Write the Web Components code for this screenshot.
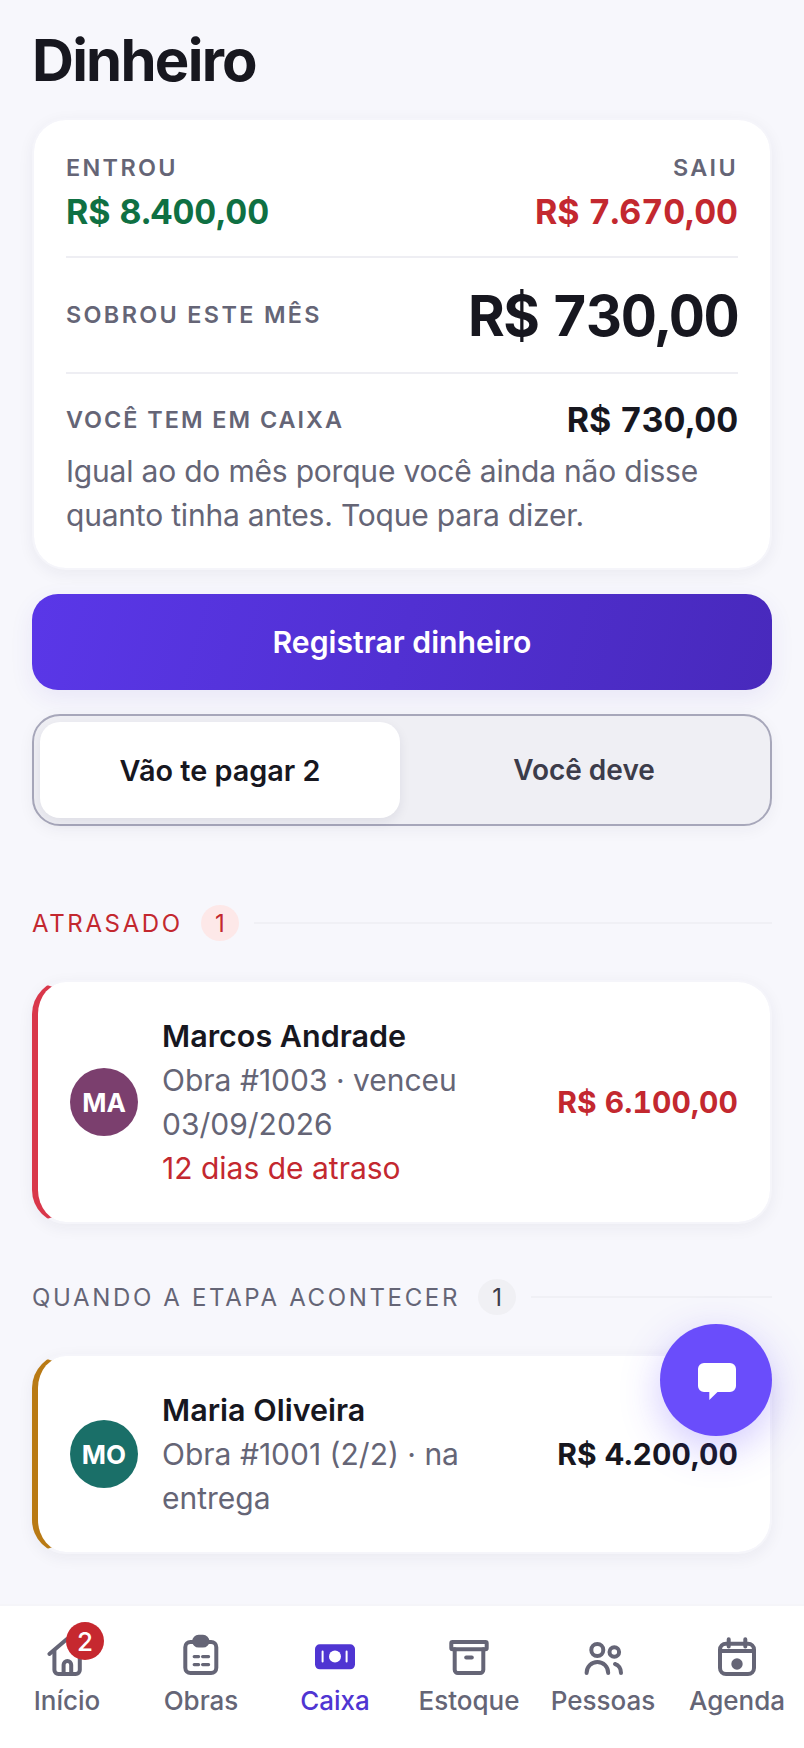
<!DOCTYPE html>
<html lang="pt-BR">
<head>
<meta charset="utf-8">
<title>Dinheiro</title>
<style>
  html, body { margin: 0; height: 100%; }
  body { font-family: Inter, "Noto Sans", sans-serif; background: #f7f7fc; color: #17171f; }
</style>
</head>
<body>
<app-shell>
  <page-title>Dinheiro</page-title>
  <money-summary></money-summary>
  <primary-button>Registrar dinheiro</primary-button>
  <segment-tabs></segment-tabs>
  <section-head tone="late" count="1">ATRASADO</section-head>
  <debt-card tone="late" initials="MA" amount="R$ 6.100,00" name="Marcos Andrade">
    Obra #1003 · venceu 03/09/2026
    <span slot="extra">12 dias de atraso</span>
  </debt-card>
  <section-head count="1">QUANDO A ETAPA ACONTECER</section-head>
  <debt-card tone="wait" initials="MO" amount="R$ 4.200,00" name="Maria Oliveira">
    Obra #1001 (2/2) · na entrega
  </debt-card>
  <chat-fab slot="over"></chat-fab>
  <bottom-nav slot="nav"></bottom-nav>
</app-shell>

<script>
(function () {
    'use strict';

    // small helper, every element below is the same shape
    function define(name, css, html) {
        customElements.define(name, class extends HTMLElement {
            constructor() {
                super();
                let root = this.attachShadow({ mode: 'open' });
                root.innerHTML = `<style>${css}</style>` + (typeof html === 'function' ? html(this) : html);
            }
        });
    }

    define('app-shell', `
        :host { display: flex; flex-direction: column; height: 100vh; position: relative; overflow: hidden; }
        main { flex: 1; min-height: 0; overflow: hidden; padding: 0 32px; }
    `, `<main><slot></slot></main><slot name="over"></slot><slot name="nav"></slot>`);

    define('page-title', `
        :host { display: block; padding-top: 30px; margin-bottom: 28px; font-size: 58px; line-height: 60px; font-weight: 700; letter-spacing: -0.03em; color: #17171f; }
    `, `<slot></slot>`);

    define('money-summary', `
        :host { display: block; box-sizing: border-box; background: #fff; background-clip: padding-box; border: 2px solid #f5f5fa; border-radius: 34px; padding: 34px 32px 31px; box-shadow: 0 4px 16px rgba(30,30,60,.06); }
        .top { display: flex; justify-content: space-between; padding-bottom: 23px; border-bottom: 2px solid #eeeef3; }
        .right { text-align: right; }
        .label { font-size: 23.4px; line-height: 28px; font-weight: 600; letter-spacing: .1em; color: #656576; white-space: nowrap; }
        .tight { letter-spacing: .085em; }
        .val { font-size: 34px; line-height: 42px; font-weight: 700; margin-top: 9px; letter-spacing: -0.002em; font-variant-numeric: tabular-nums; }
        .in { color: #0f7043; }
        .out { color: #c3282f; }
        .mid { display: flex; justify-content: space-between; align-items: center; height: 114px; border-bottom: 2px solid #eeeef3; }
        .big { font-size: 56px; font-weight: 700; line-height: 68px; padding-top: 2px; letter-spacing: -0.029em; font-variant-numeric: tabular-nums; }
        .cash { display: flex; justify-content: space-between; align-items: center; height: 44px; margin-top: 24px; }
        .cash b { font-size: 34px; font-weight: 700; margin-top: -2px; letter-spacing: -0.005em; font-variant-numeric: tabular-nums; }
        p { margin: 7px 0 0; font-size: 30px; line-height: 44px; letter-spacing: -0.0067em; color: #656576; }
    `, `
        <div class="top">
          <div><div class="label">ENTROU</div><div class="val in">R$ 8.400,00</div></div>
          <div class="right"><div class="label">SAIU</div><div class="val out">R$ 7.670,00</div></div>
        </div>
        <div class="mid"><span class="label">SOBROU ESTE MÊS</span><span class="big">R$ 730,00</span></div>
        <div class="cash"><span class="label tight">VOCÊ TEM EM CAIXA</span><b>R$ 730,00</b></div>
        <p>Igual ao do mês porque você ainda não disse quanto tinha antes. Toque para dizer.</p>
    `);

    define('primary-button', `
        :host { display: flex; align-items: center; justify-content: center; height: 96px; margin-top: 24px; border-radius: 26px; color: #fff; font-size: 30.2px; font-weight: 600; background: linear-gradient(105deg, #5a37e8 0%, #4829bc 100%); box-shadow: 0 8px 24px rgba(70,40,190,.08); }
    `, `<slot></slot>`);

    define('segment-tabs', `
        :host { display: flex; box-sizing: border-box; height: 112px; margin-top: 24px; padding: 6px; gap: 4px; border: 2px solid #a7a7ba; border-radius: 28px; background: #efeff4; box-shadow: 0 4px 16px rgba(30,30,60,.05); font-size: 28px; }
        div { flex: 1; display: flex; align-items: center; justify-content: center; border-radius: 20px; font-weight: 600; color: #3c3c4a; }
        .on { background: #fff; color: #17171f; font-size: 28.8px; box-shadow: 0 4px 12px rgba(30,30,60,.08); }
    `, `<div class="on">Vão te pagar 2</div><div>Você deve</div>`);

    define('section-head', `
        :host { display: flex; align-items: center; height: 36px; margin-top: 55px; margin-bottom: 39px; color: #656576; font-size: 24px; letter-spacing: 2.65px; }
        :host([tone="late"]) { color: #c3282f; margin-top: 79px; }
        .n { width: 38px; height: 36px; margin-left: 18px; border-radius: 50%; display: flex; align-items: center; justify-content: center; letter-spacing: 0; background: #f0f0f4; color: #3c3c4a; }
        :host([tone="late"]) .n { background: #fde8e8; color: #c3282f; }
        .line { flex: 1; height: 2px; margin-left: 15px; background: #f0f0f5; }
    `, el => `<slot></slot><span class="n">${el.getAttribute('count')}</span><span class="line"></span>`);

    define('debt-card', `
        :host { display: flex; align-items: center; gap: 24px; box-sizing: border-box; padding: 32px 32px; background: #fff; background-clip: padding-box; border: 2px solid #f5f5fa; border-left: 6px solid #d9374a; border-radius: 34px; box-shadow: 0 4px 16px rgba(30,30,60,.06); }
        :host([tone="wait"]) { border-left-color: #b97a14; }
        .av { flex: none; width: 68px; height: 68px; border-radius: 50%; display: flex; align-items: center; justify-content: center; color: #fff; font-size: 26px; font-weight: 700; background: #7b3f6e; }
        :host([tone="wait"]) .av { background: #1a6f68; }
        .body { flex: 1; min-width: 0; font-size: 30px; line-height: 44px; color: #656576; }
        .name { font-size: 30.5px; font-weight: 600; color: #17171f; }
        ::slotted([slot="extra"]) { display: block; color: #c3282f; }
        .amt { flex: none; font-size: 30px; font-weight: 700; color: #17171f; letter-spacing: 0.003em; font-variant-numeric: tabular-nums; }
        :host([tone="late"]) .amt { color: #c3282f; }
    `, el => `
        <div class="av">${el.getAttribute('initials')}</div>
        <div class="body"><div class="name">${el.getAttribute('name')}</div><slot></slot><slot name="extra"></slot></div>
        <div class="amt">${el.getAttribute('amount')}</div>
    `);

    define('chat-fab', `
        :host { position: absolute; left: 660px; top: 1324px; width: 112px; height: 112px; border-radius: 50%; background: #6a4dfb; display: flex; align-items: center; justify-content: center; box-shadow: 0 12px 40px rgba(90,60,250,.28); }
        svg { width: 48px; height: 48px; display: block; }
    `, `<svg viewBox="0 0 48 48"><path fill="#fff" d="M12 7h26a6 6 0 0 1 6 6v17a6 6 0 0 1-6 6H25.5L17.3 44v-8H12a6 6 0 0 1-6-6V13a6 6 0 0 1 6-6z"/></svg>`);

    const icons = {
        home: `<path d="M3.2 11L12 3.5l8.8 7.5"/><path d="M5.7 9.5V19a2 2 0 0 0 2 2h8.7a2 2 0 0 0 2-2V9.5"/><path d="M10.3 21v-4.6a1.9 1.9 0 0 1 3.8 0V21"/>`,
        obras: `<rect x="4.15" y="5" width="15.5" height="15.5" rx="2.6"/><rect x="8.6" y="2.4" width="6.6" height="4.4" rx="2.2" fill="currentColor"/><path d="M8.6 12.3h2.2M12.8 12.3h3M8.6 16.3h2.2M12.8 16.3h3" stroke-width="1.6"/>`,
        caixa: `<rect x="2" y="6.15" width="20" height="12.5" rx="2.4" fill="currentColor" stroke="none"/><circle cx="12" cy="12.3" r="3" fill="#fff" stroke="none"/><path d="M5.8 9.8v5M17.8 9.8v5" stroke="#fff" stroke-width="1"/>`,
        estoque: `<rect x="3.15" y="5" width="17.7" height="3.6" rx=".6"/><path d="M4.85 8.6v10.3a1.6 1.6 0 0 0 1.6 1.6h11.1a1.6 1.6 0 0 0 1.6-1.6V8.6"/><path d="M10.6 12.8h2.8"/>`,
        pessoas: `<circle cx="9.15" cy="9" r="3"/><circle cx="17.65" cy="10" r="2.4"/><path d="M3.8 20.5c0-3.2 2.4-5.5 5.4-5.5s5.4 2.3 5.4 5.5"/><path d="M18 16c1.8.5 3 2.3 3 4.5"/>`,
        agenda: `<rect x="3.5" y="5.85" width="17" height="15.15" rx="3"/><path d="M7.85 3.6v3.6M16.15 3.6v3.6M3.5 9.5h17"/><circle cx="12" cy="16" r="2.85" fill="currentColor" stroke="none"/>`
    };

    define('nav-item', `
        :host { flex: 1; display: flex; flex-direction: column; align-items: center; position: relative; color: #656576; font-size: 26px; font-weight: 500; }
        :host([active]) { color: #4f35d2; }
        svg { width: 48px; height: 48px; display: block; fill: none; stroke: currentColor; stroke-width: 2; stroke-linecap: round; stroke-linejoin: round; }
        .lbl { line-height: 34px; margin-top: 4px; white-space: nowrap; }
        .badge { position: absolute; left: 66px; top: -10px; width: 38px; height: 38px; border-radius: 50%; background: #c6282f; color: #fff; font-size: 26px; font-weight: 500; display: flex; align-items: center; justify-content: center; }
    `, el => `
        <svg viewBox="0 0 24 24">${icons[el.getAttribute('icon')]}</svg>
        <span class="lbl"><slot></slot></span>
        ${el.hasAttribute('badge') ? `<span class="badge">${el.getAttribute('badge')}</span>` : ''}
    `);

    define('bottom-nav', `
        :host { display: flex; flex: none; box-sizing: border-box; height: 144px; padding-top: 26px; background: #fff; border-top: 2px solid #f5f5f9; }
    `, `
        <nav-item icon="home" badge="2">Início</nav-item>
        <nav-item icon="obras">Obras</nav-item>
        <nav-item icon="caixa" active>Caixa</nav-item>
        <nav-item icon="estoque">Estoque</nav-item>
        <nav-item icon="pessoas">Pessoas</nav-item>
        <nav-item icon="agenda">Agenda</nav-item>
    `);
})();
</script>
</body>
</html>
